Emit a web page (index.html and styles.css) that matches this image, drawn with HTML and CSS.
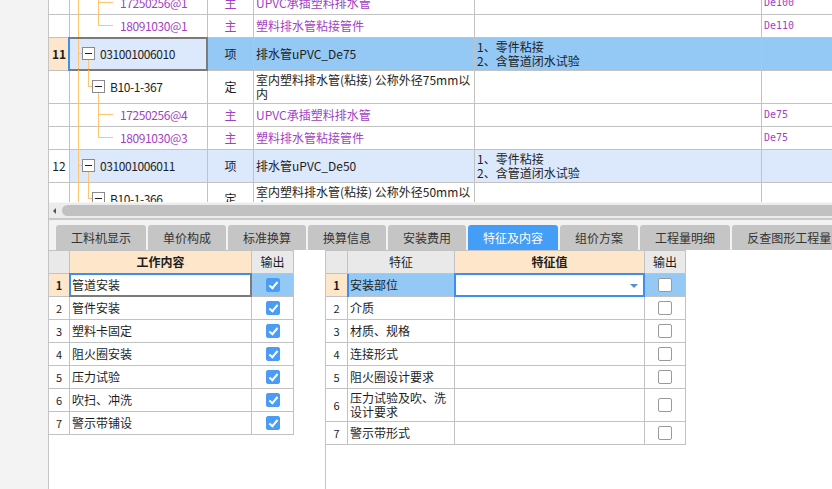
FILE: index.html
```html
<!DOCTYPE html>
<html lang="zh">
<head>
<meta charset="utf-8">
<link rel="stylesheet" href="styles.css">
</head>
<body>
<div class="app">
  <div class="side"></div>
  <div class="main">
    <div class="top">
      <div class="top-inner">
        <div class="row h23">
          <div class="c num"></div>
          <div class="c tree"><span class="ln va"></span><span class="ln vc"></span><span class="ln hc"></span><span class="code purple l3">17250256@1</span></div>
          <div class="c type purple">主</div>
          <div class="c name purple">UPVC承插塑料排水管</div>
          <div class="c feat"></div>
          <div class="c spec purple">De100</div>
        </div>
        <div class="row h23">
          <div class="c num"></div>
          <div class="c tree"><span class="ln va"></span><span class="ln vc-top"></span><span class="ln hc"></span><span class="code purple l3">18091030@1</span></div>
          <div class="c type purple">主</div>
          <div class="c name purple">塑料排水管粘接管件</div>
          <div class="c feat"></div>
          <div class="c spec purple">De110</div>
        </div>
        <div class="row h33 sel">
          <div class="c num cur">11</div>
          <div class="c tree curcell"><span class="ln va"></span><span class="ln ha"></span><span class="box b1"></span><span class="ln vb-down"></span><span class="code l1">031001006010</span></div>
          <div class="c type">项</div>
          <div class="c name">排水管uPVC_De75</div>
          <div class="c feat">1、零件粘接<br>2、含管道闭水试验</div>
          <div class="c spec"></div>
        </div>
        <div class="row h33">
          <div class="c num"></div>
          <div class="c tree"><span class="ln va"></span><span class="ln vb-top"></span><span class="ln hb"></span><span class="box b2"></span><span class="ln vc-down"></span><span class="code l2">B10-1-367</span></div>
          <div class="c type">定</div>
          <div class="c name">室内塑料排水管(粘接) 公称外径75mm以<br>内</div>
          <div class="c feat"></div>
          <div class="c spec"></div>
        </div>
        <div class="row h23">
          <div class="c num"></div>
          <div class="c tree"><span class="ln va"></span><span class="ln vc"></span><span class="ln hc"></span><span class="code purple l3">17250256@4</span></div>
          <div class="c type purple">主</div>
          <div class="c name purple">UPVC承插塑料排水管</div>
          <div class="c feat"></div>
          <div class="c spec purple">De75</div>
        </div>
        <div class="row h23">
          <div class="c num"></div>
          <div class="c tree"><span class="ln va"></span><span class="ln vc-top"></span><span class="ln hc"></span><span class="code purple l3">18091030@3</span></div>
          <div class="c type purple">主</div>
          <div class="c name purple">塑料排水管粘接管件</div>
          <div class="c feat"></div>
          <div class="c spec purple">De75</div>
        </div>
        <div class="row h33 lite">
          <div class="c num">12</div>
          <div class="c tree"><span class="ln va"></span><span class="ln ha"></span><span class="box b1"></span><span class="ln vb-down"></span><span class="code l1">031001006011</span></div>
          <div class="c type">项</div>
          <div class="c name">排水管uPVC_De50</div>
          <div class="c feat">1、零件粘接<br>2、含管道闭水试验</div>
          <div class="c spec"></div>
        </div>
        <div class="row h33">
          <div class="c num"></div>
          <div class="c tree"><span class="ln va"></span><span class="ln vb-top"></span><span class="ln hb"></span><span class="box b2"></span><span class="ln vc-down"></span><span class="code l2">B10-1-366</span></div>
          <div class="c type">定</div>
          <div class="c name">室内塑料排水管(粘接) 公称外径50mm以<br>内</div>
          <div class="c feat"></div>
          <div class="c spec"></div>
        </div>
      </div>
    </div>
    <div class="hscroll"><span class="arrow"></span><span class="thumb"></span></div>
    <div class="tabstrip">
      <div class="tab">工料机显示</div>
      <div class="tab">单价构成</div>
      <div class="tab">标准换算</div>
      <div class="tab">换算信息</div>
      <div class="tab">安装费用</div>
      <div class="tab active">特征及内容</div>
      <div class="tab">组价方案</div>
      <div class="tab">工程量明细</div>
      <div class="tab">反查图形工程量</div>
    </div>
    <div class="bottom">
      <div class="pane-left">
        <div class="tbl tl">
          <div class="trow hdr"><div class="c n"></div><div class="c peach bold center">工作内容</div><div class="c center">输出</div></div>
          <div class="trow"><div class="c n cur">1</div><div class="c txt cur-edit">管道安装</div><div class="c ck blue"><span class="chk on"></span></div></div>
          <div class="trow"><div class="c n">2</div><div class="c txt">管件安装</div><div class="c ck"><span class="chk on"></span></div></div>
          <div class="trow"><div class="c n">3</div><div class="c txt">塑料卡固定</div><div class="c ck"><span class="chk on"></span></div></div>
          <div class="trow"><div class="c n">4</div><div class="c txt">阻火圈安装</div><div class="c ck"><span class="chk on"></span></div></div>
          <div class="trow"><div class="c n">5</div><div class="c txt">压力试验</div><div class="c ck"><span class="chk on"></span></div></div>
          <div class="trow"><div class="c n">6</div><div class="c txt">吹扫、冲洗</div><div class="c ck"><span class="chk on"></span></div></div>
          <div class="trow"><div class="c n">7</div><div class="c txt">警示带铺设</div><div class="c ck"><span class="chk on"></span></div></div>
        </div>
      </div>
      <div class="pane-right">
        <div class="tbl tr">
          <div class="trow hdr"><div class="c n"></div><div class="c center">特征</div><div class="c peach bold center">特征值</div><div class="c center">输出</div></div>
          <div class="trow"><div class="c n cur">1</div><div class="c txt blue selleft">安装部位</div><div class="c edit"><span class="dd"></span></div><div class="c ck blue"><span class="chk"></span></div></div>
          <div class="trow"><div class="c n">2</div><div class="c txt">介质</div><div class="c"></div><div class="c ck"><span class="chk"></span></div></div>
          <div class="trow"><div class="c n">3</div><div class="c txt">材质、规格</div><div class="c"></div><div class="c ck"><span class="chk"></span></div></div>
          <div class="trow"><div class="c n">4</div><div class="c txt">连接形式</div><div class="c"></div><div class="c ck"><span class="chk"></span></div></div>
          <div class="trow"><div class="c n">5</div><div class="c txt">阻火圈设计要求</div><div class="c"></div><div class="c ck"><span class="chk"></span></div></div>
          <div class="trow tall"><div class="c n">6</div><div class="c txt">压力试验及吹、洗<br>设计要求</div><div class="c"></div><div class="c ck"><span class="chk"></span></div></div>
          <div class="trow"><div class="c n">7</div><div class="c txt">警示带形式</div><div class="c"></div><div class="c ck"><span class="chk"></span></div></div>
        </div>
      </div>
    </div>
  </div>
</div>
</body>
</html>
```
FILE: styles.css
```css
* { box-sizing: border-box; }
html, body { margin: 0; padding: 0; }
body {
  width: 832px;
  height: 489px;
  overflow: hidden;
  background: #fff;
  font-family: "Noto Sans CJK SC", "Noto Sans", sans-serif;
  font-size: 12px;
  color: #1e1e1e;
}
.app { display: flex; height: 489px; }
.side { width: 48px; flex: none; background: #f3f3f3; }
.main {
  flex: 1;
  min-width: 0;
  border-left: 1px solid #c4c4c4;
  display: flex;
  flex-direction: column;
  overflow: hidden;
}

/* top grid */
.top { height: 202px; overflow: hidden; flex: none; }
.top-inner { margin-top: -8px; }
.row {
  display: grid;
  grid-template-columns: 21px 138px 46px 221px 287px 1fr;
  width: 783px;
}
.row.h23 { height: 23px; }
.row.h33 { height: 33px; }
.c {
  border-right: 1px solid #c2c2c2;
  border-bottom: 1px solid #c2c2c2;
  display: flex;
  align-items: center;
  line-height: 14px;
  white-space: nowrap;
  overflow: visible;
}
.row .c:last-child { border-right: none; }
.num { justify-content: center; font-size: 12px; }
.num.cur { background: #fde6c9; font-weight: bold; }
.tree { position: relative; }
.type { justify-content: center; }
.name { padding-left: 2px; }
.feat { padding-left: 2px; }
.spec { padding-left: 2px; font-family: "DejaVu Sans Mono", monospace; font-size: 10px; }
.purple { color: #a33fc4; }
.code { letter-spacing: -0.4px; }
.l1 { padding-left: 30px; }
.l2 { padding-left: 40px; }
.l3 { padding-left: 50px; }

.sel .c { background: #94c8f5; }
.sel .c.num { background: #fde6c9; }
.sel .c.tree { background: #dce9fc; }
.lite .c { background: #dce9fc; }
.lite .c.num { background: #fff; }

.curcell::after {
  content: "";
  position: absolute;
  top: -1px; left: -2px; right: -1px; bottom: -1px;
  border: 2px solid #7b7b7b;
  border-left-color: #3d8ef0;
}

.ln { position: absolute; background: #ffc46e; }
.va { left: 8px; top: -1px; bottom: -1px; width: 1px; }
.ha { left: 8px; top: 15px; width: 4px; height: 1px; }
.vb-top { left: 18px; top: -1px; height: 16px; width: 1px; }
.vb-down { left: 18px; top: 22px; bottom: -1px; width: 1px; }
.hb { left: 18px; top: 15px; width: 4px; height: 1px; }
.vc { left: 28px; top: -1px; bottom: -1px; width: 1px; }
.vc-top { left: 28px; top: -1px; height: 12px; width: 1px; }
.vc-down { left: 28px; top: 22px; bottom: -1px; width: 1px; }
.hc { left: 28px; top: 10px; width: 15px; height: 1px; }
.box {
  position: absolute;
  top: 9px;
  width: 13px;
  height: 13px;
  border: 1px solid #8a8a8a;
  background: #fff;
}
.box::before {
  content: "";
  position: absolute;
  left: 2px; right: 2px; top: 5px;
  height: 1px;
  background: #222;
}
.b1 { left: 12px; }
.b2 { left: 22px; }

/* scrollbar */
.hscroll {
  height: 16px;
  flex: none;
  background: #ececec;
  display: flex;
  align-items: center;
  border-top: 1px solid #f6f6f6;
}
.arrow {
  width: 0; height: 0;
  margin-left: 4px;
  margin-right: 6px;
  border-top: 3px solid transparent;
  border-bottom: 3px solid transparent;
  border-right: 3px solid #555;
}
.thumb {
  flex: 1;
  height: 11px;
  border-radius: 6px 0 0 6px;
  background: #c1c1c1;
}

/* tabs */
.tabstrip {
  flex: none;
  border-top: 2px solid #c9c9c9;
  background: #f2f2f2;
  padding: 5px 0 0 7px;
  display: flex;
  gap: 2px;
  height: 32px;
  white-space: nowrap;
}
.tab {
  flex: none;
  height: 25px;
  line-height: 25px;
  padding: 0 15px;
  background: #c5c5c5;
  border-radius: 3px 3px 0 0;
  color: #333;
  font-size: 12px;
}
.tab.active { background: #449df7; color: #fff; }

/* bottom */
.bottom { flex: 1; display: flex; background: #fff; }
.pane-left { width: 276px; flex: none; }
.pane-right { flex: 1; border-left: 1px solid #c4c4c4; }
.tbl { border-top: 1px solid #c2c2c2; }
.tl { width: 245px; }
.tr { width: 360px; }
.trow { display: grid; height: 23px; }
.trow.tall { height: 33px; }
.tl .trow { grid-template-columns: 21px 182px 42px; }
.tr .trow { grid-template-columns: 22px 107px 190px 41px; }
.trow .c { position: relative; }
.hdr .c { background: #e9e9e9; }
.hdr .c.peach { background: #fde6c9; }
.center { justify-content: center; }
.bold { font-weight: bold; }
.n { justify-content: center; font-size: 11px; }
.n.cur { background: #fde6c9; font-weight: bold; }
.txt { padding-left: 2px; }
.ck { justify-content: center; }
.blue { background: #94c8f5; }
.cur-edit::after {
  content: "";
  position: absolute;
  top: -1px; left: -1px; right: -1px; bottom: -1px;
  border: 2px solid #7b7b7b;
  border-top-color: #3d8ef0;
  border-left-color: #3d8ef0;
}
.selleft::before {
  content: "";
  position: absolute;
  top: 0; bottom: -1px; left: -1px;
  width: 2px;
  background: #3d8ef0;
}
.edit::after {
  content: "";
  position: absolute;
  top: -1px; left: -1px; right: -1px; bottom: -1px;
  border: 2px solid #3d8ef0;
}
.dd {
  position: absolute;
  right: 6px;
  top: 10px;
  width: 0; height: 0;
  border-left: 4px solid transparent;
  border-right: 4px solid transparent;
  border-top: 4px solid #5b8fc7;
}
.chk {
  width: 14px;
  height: 14px;
  border: 1px solid #9a9a9a;
  border-radius: 2px;
  background: #fff;
  position: relative;
}
.chk.on {
  border-color: #4a9cf5;
  background: #4a9cf5;
}
.chk.on::after {
  content: "";
  position: absolute;
  left: 4px;
  top: 1px;
  width: 3px;
  height: 7px;
  border-right: 2px solid #fff;
  border-bottom: 2px solid #fff;
  transform: rotate(40deg);
}
```
